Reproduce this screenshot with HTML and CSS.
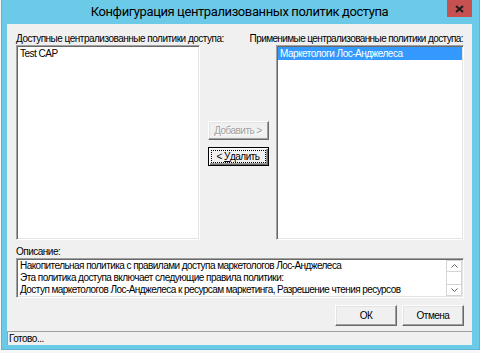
FILE: index.html
```html
<!DOCTYPE html>
<html lang="ru">
<head>
<meta charset="utf-8">
<title>Конфигурация централизованных политик доступа</title>
<link rel="stylesheet" href="styles.css">
</head>
<body>
<div class="window">
  <div class="titlebar">
    <span></span>
    <div class="title">Конфигурация централизованных политик доступа</div>
    <div class="close">
      <svg width="9" height="8" viewBox="0 0 9 8"><path d="M1 1 L8 7 M8 1 L1 7" stroke="#1b1b1b" stroke-width="1.9" fill="none"/></svg>
    </div>
  </div>
  <div class="client">
    <div class="labels">
      <span>Доступные централизованные политики доступа:</span>
      <span class="rlabel">Применимые централизованные политики доступа:</span>
    </div>
    <div class="lists">
      <div class="listbox"><div class="item">Test CAP</div></div>
      <div class="mid">
        <div class="btn disabled"><u>Д</u>обавить &gt;</div>
        <div class="btn focused"><span class="focus">&lt;&nbsp;<u>У</u>далить</span></div>
      </div>
      <div class="listbox"><div class="item sel">Маркетологи Лос-Анджелеса</div></div>
    </div>
    <div class="desc-label">Описание:</div>
    <div class="desc">
      <div class="desc-text">
        <div>Накопительная политика с правилами доступа маркетологов Лос-Анджелеса</div>
        <div>Эта политика доступа включает следующие правила политики:</div>
        <div>Доступ маркетологов Лос-Анджелеса к ресурсам маркетинга, Разрешение чтения ресурсов</div>
      </div>
      <div class="scroll">
        <div class="arrow"><svg width="7" height="4" viewBox="0 0 7 4"><path d="M0.5 3.5 L3.5 0.5 L6.5 3.5" stroke="#606060" fill="none"/></svg></div>
        <div class="track"></div>
        <div class="arrow"><svg width="7" height="4" viewBox="0 0 7 4"><path d="M0.5 0.5 L3.5 3.5 L6.5 0.5" stroke="#606060" fill="none"/></svg></div>
      </div>
    </div>
    <div class="actions">
      <div class="btn wide">ОК</div>
      <div class="btn wide">Отмена</div>
    </div>
    <div class="status">Готово...</div>
  </div>
</div>
</body>
</html>
```

FILE: styles.css
```css
* { box-sizing: border-box; }
html, body { margin: 0; padding: 0; }
body {
  width: 480px;
  height: 353px;
  overflow: hidden;
  background: #f7f7f7;
  font-family: "Liberation Sans", Arial, sans-serif;
  font-size: 10px;
  letter-spacing: -0.5px;
  color: #000;
}
.window {
  margin-left: 1px;
  width: 479px;
  height: 350px;
  background: #6ccae9;
  border-left: 1px solid #5bb6d6;
  border-right: 1px solid #5bb6d6;
  border-bottom: 1px solid #5bb6d6;
  padding: 0 7px 4px 5px;
  display: flex;
  flex-direction: column;
}
.titlebar {
  height: 24px;
  display: grid;
  grid-template-columns: 1fr auto 1fr;
  align-items: center;
}
.title {
  font-family: Roboto, "Noto Sans", sans-serif;
  font-size: 13px;
  letter-spacing: -0.4px;
  line-height: 24px;
  color: #000;
  white-space: nowrap;
}
.close {
  justify-self: end;
  align-self: start;
  width: 25px;
  height: 17px;
  background: #c75050;
  display: flex;
  align-items: center;
  justify-content: center;
}
.client {
  background: #f0f0f0;
  height: 321px;
  display: flex;
  flex-direction: column;
  padding: 9px 8px 0 9px;
}
.labels {
  display: flex;
  justify-content: space-between;
  height: 12px;
  line-height: 12px;
  white-space: nowrap;
}
.rlabel { padding-right: 1px; letter-spacing: -0.6px; }
.lists {
  display: grid;
  grid-template-columns: 184px 1fr 188px;
  height: 195px;
}
.listbox, .desc {
  background: #fff;
  border: 1px solid;
  border-color: #a0a0a0 #fff #fff #a0a0a0;
  box-shadow: inset 1px 1px #696969, inset -1px -1px #e3e3e3;
  padding: 1px;
}
.item {
  height: 13px;
  line-height: 13px;
  padding-left: 2px;
  white-space: nowrap;
}
.sel { background: #3399ff; color: #fff; }
.mid {
  display: flex;
  flex-direction: column;
  align-items: center;
  padding-top: 76px;
  gap: 7px;
}
.btn {
  width: 61px;
  height: 19px;
  background: #f0f0f0;
  border: 1px solid;
  border-color: #fff #696969 #696969 #fff;
  box-shadow: inset -1px -1px #a0a0a0, inset 1px 1px #e3e3e3;
  display: flex;
  align-items: center;
  justify-content: center;
  white-space: nowrap;
}
.disabled { color: #a0a0a0; text-shadow: 1px 1px #fff; }
.focused {
  border-color: #000;
  box-shadow: inset 1px 1px #fff, inset -1px -1px #696969, inset -2px -2px #a0a0a0;
  padding: 2px;
}
.focus {
  flex: 1;
  align-self: stretch;
  border: 1px dotted #000;
  display: flex;
  align-items: center;
  justify-content: center;
}
.desc-label {
  margin-top: 6px;
  height: 12px;
  line-height: 12px;
}
.desc {
  height: 40px;
  display: flex;
}
.desc-text {
  flex: 1;
  padding-left: 2px;
  line-height: 12px;
  letter-spacing: -0.55px;
  white-space: nowrap;
  overflow: hidden;
}
.scroll {
  width: 16px;
  display: grid;
  grid-template-rows: 12px 1fr 12px;
  background: #f0f0f0;
}
.arrow {
  background: #fff;
  border: 1px solid #d6d6d6;
  display: flex;
  align-items: center;
  justify-content: center;
}
.track { background: #fff; border-left: 1px solid #d6d6d6; border-right: 1px solid #d6d6d6; }
.actions {
  margin-top: 7px;
  display: flex;
  justify-content: flex-end;
  gap: 5px;
}
.wide { width: 62px; height: 21px; }
.status {
  margin: 5px -8px 0 -9px;
  height: 14px;
  border-top: 1px solid #a0a0a0;
  border-left: 1px solid #a0a0a0;
  padding-left: 1px;
  line-height: 13px;
}
```
